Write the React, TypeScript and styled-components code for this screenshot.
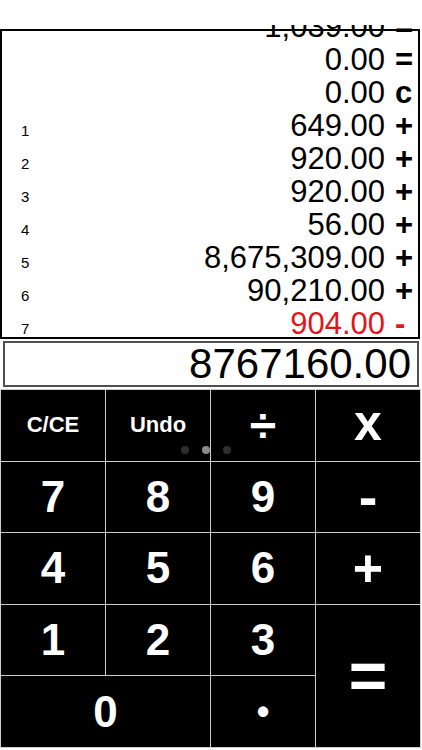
import React from "react";
import styled, { createGlobalStyle } from "styled-components";

const Global = createGlobalStyle`
  html, body { margin: 0; padding: 0; background: #fff; }
  body { font-family: "Liberation Sans", Arial, Helvetica, sans-serif; }
  * { box-sizing: border-box; }
`;

const Page = styled.div`
  width: 422px;
  height: 750px;
  display: flex;
  flex-direction: column;
  padding-top: 25px;
  overflow: hidden;
`;

const TapeViewport = styled.div`
  position: relative;
  height: 314px;
  overflow: hidden;
`;

const TapeFrame = styled.div`
  position: absolute;
  top: 4px;
  left: 0;
  width: 420px;
  bottom: 0;
  border: 2px solid #000;
  pointer-events: none;
`;

const TapeList = styled.div`
  display: flex;
  flex-direction: column;
  margin-top: -15px;
  width: 420px;
`;

const Row = styled.div`
  display: flex;
  align-items: baseline;
  height: 33px;
  line-height: 33px;
  padding-left: 21px;
`;

const Label = styled.span`
  font-size: 15px;
  line-height: normal;
  color: #000;
  width: 30px;
`;

const Amount = styled.span<{ $red?: boolean }>`
  flex: 1;
  text-align: right;
  font-size: 31px;
  color: ${(p) => (p.$red ? "#e3151c" : "#000")};
`;

const Op = styled.span<{ $red?: boolean }>`
  width: 25px;
  margin-left: 10px;
  font-size: 31px;
  font-weight: bold;
  color: ${(p) => (p.$red ? "#e3151c" : "#000")};
`;

const Display = styled.div`
  margin: 2px 3px 0 3px;
  width: 416px;
  height: 46px;
  border: 2px solid #505050;
  font-size: 42px;
  line-height: 42px;
  text-align: right;
  padding-right: 6px;
  color: #000;
`;

const Keypad = styled.div`
  position: relative;
  margin-top: 2px;
  width: 421px;
  height: 359px;
  background: #cdcdcd;
  padding: 1px;
  display: grid;
  grid-template-columns: repeat(4, 1fr);
  grid-template-rows: repeat(5, 1fr);
  gap: 1px;
`;

const Key = styled.div<{ $size?: number; $col?: string; $row?: string; $dy?: number }>`
  background: #000;
  color: #fff;
  display: flex;
  align-items: center;
  justify-content: center;
  font-weight: bold;
  font-size: ${(p) => p.$size ?? 44}px;
  grid-column: ${(p) => p.$col ?? "auto"};
  grid-row: ${(p) => p.$row ?? "auto"};
  padding-bottom: ${(p) => p.$dy ?? 0}px;
  user-select: none;
`;

const Dots = styled.div`
  position: absolute;
  top: 57px;
  left: 181px;
  display: flex;
  gap: 13px;
`;

const Dot = styled.span<{ $active?: boolean }>`
  width: 8px;
  height: 8px;
  border-radius: 50%;
  background: ${(p) => (p.$active ? "#8a8a8a" : "#2e2e2e")};
`;

type Entry = { n?: string; amount: string; op: string; red?: boolean };

const entries: Entry[] = [
  { amount: "1,039.00", op: "=" },
  { amount: "0.00", op: "=" },
  { amount: "0.00", op: "c" },
  { n: "1", amount: "649.00", op: "+" },
  { n: "2", amount: "920.00", op: "+" },
  { n: "3", amount: "920.00", op: "+" },
  { n: "4", amount: "56.00", op: "+" },
  { n: "5", amount: "8,675,309.00", op: "+" },
  { n: "6", amount: "90,210.00", op: "+" },
  { n: "7", amount: "904.00", op: "-", red: true },
];

export default function App() {
  return (
    <>
      <Global />
      <Page>
        <TapeViewport>
          <TapeList>
            {entries.map((e, i) => (
              <Row key={i}>
                <Label>{e.n ?? ""}</Label>
                <Amount $red={e.red}>{e.amount}</Amount>
                <Op $red={e.red}>{e.op}</Op>
              </Row>
            ))}
          </TapeList>
          <TapeFrame />
        </TapeViewport>
        <Display>8767160.00</Display>
        <Keypad>
          <Key $size={22}>C/CE</Key>
          <Key $size={22}>Undo</Key>
          <Key $size={48}>÷</Key>
          <Key $size={50} $dy={4}>x</Key>
          <Key>7</Key>
          <Key>8</Key>
          <Key>9</Key>
          <Key $size={56}>-</Key>
          <Key>4</Key>
          <Key>5</Key>
          <Key>6</Key>
          <Key $size={52}>+</Key>
          <Key>1</Key>
          <Key>2</Key>
          <Key>3</Key>
          <Key $size={66} $row="4 / span 2" $col="4">=</Key>
          <Key $col="1 / span 2">0</Key>
          <Key $size={36}>•</Key>
          <Dots>
            <Dot />
            <Dot $active />
            <Dot />
          </Dots>
        </Keypad>
      </Page>
    </>
  );
}
